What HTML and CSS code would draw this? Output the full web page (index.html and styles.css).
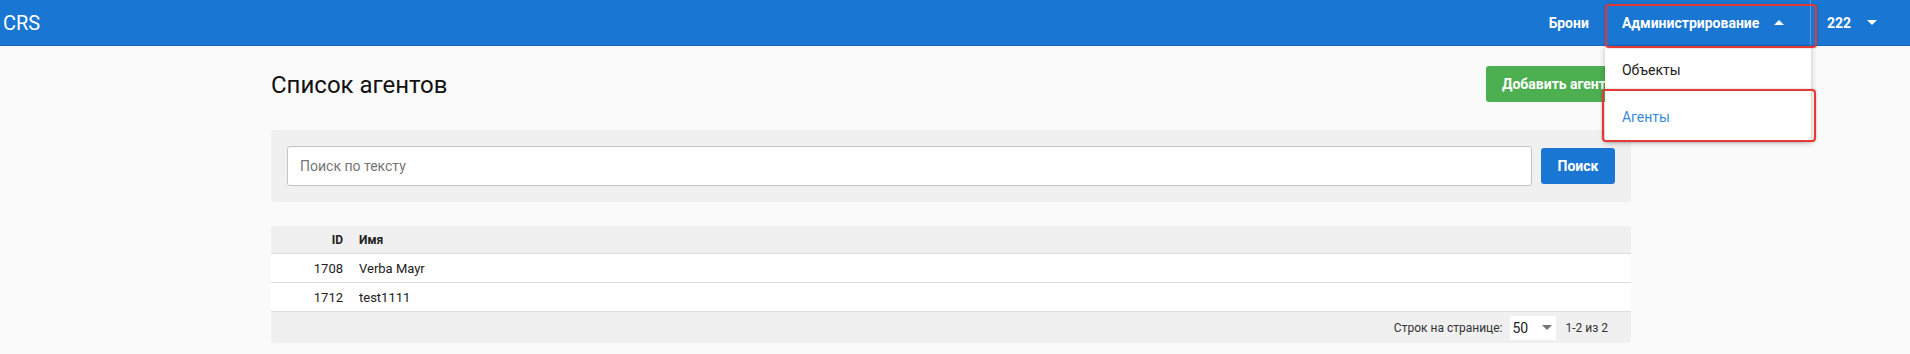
FILE: index.html
```html
<!DOCTYPE html>
<html lang="ru">

<head>
    <meta charset="UTF-8">
    <title>CRS</title>
    <link rel="stylesheet" href="styles.css">
</head>

<body>
    <header class="topbar">
        <div class="brand">CRS</div>
        <nav class="nav">
            <a class="nav-item">Брони</a>
            <div class="nav-item nav-open">
                Администрирование <span class="caret caret-up"></span>
                <div class="menu">
                    <div class="menu-item">Объекты</div>
                    <div class="menu-item active">Агенты</div>
                </div>
                <div class="mark mark-nav"></div>
                <div class="mark mark-item"></div>
            </div>
            <div class="nav-item">222 <span class="caret"></span></div>
        </nav>
    </header>

    <main class="content">
        <div class="title-row">
            <h1>Список агентов</h1>
            <button class="btn btn-green">Добавить агента</button>
        </div>

        <div class="search-panel">
            <input class="search-input" type="text" placeholder="Поиск по тексту">
            <button class="btn btn-blue">Поиск</button>
        </div>

        <div class="grid">
            <div class="grid-row grid-head">
                <div class="col-id">ID</div>
                <div class="col-name">Имя</div>
            </div>
            <div class="grid-row">
                <div class="col-id">1708</div>
                <div class="col-name">Verba Mayr</div>
            </div>
            <div class="grid-row">
                <div class="col-id">1712</div>
                <div class="col-name">test1111</div>
            </div>
            <div class="grid-footer">
                <span>Строк на странице:</span>
                <div class="page-select">50 <span class="caret caret-grey"></span></div>
                <span>1-2 из 2</span>
            </div>
        </div>
    </main>
</body>

</html>
```

FILE: styles.css
```css
body {
    margin: 0;
    background-color: #fafafa;
    font-family: Roboto, "Noto Sans", sans-serif;
    color: #212121;
}

.topbar {
    height: 46px;
    background-color: #1976d2;
    border-bottom: 1px solid #1565c0;
    box-sizing: border-box;
    display: flex;
    align-items: center;
    justify-content: space-between;
    color: #fff;
}

.brand {
    font-size: 20px;
    padding-left: 3px;
}

.nav {
    display: flex;
    align-items: stretch;
    height: 100%;
    padding-right: 17px;
}

.nav-item {
    position: relative;
    display: flex;
    align-items: center;
    font-size: 14px;
    font-weight: bold;
    padding: 0 16px;
}

.nav-open {
    width: 206px;
    box-sizing: border-box;
    padding: 0 0 0 17px;
    border-right: 1px solid #5a9be0;
}

.caret {
    display: inline-block;
    width: 0;
    height: 0;
    border-left: 5px solid transparent;
    border-right: 5px solid transparent;
    border-top: 5px solid #fff;
    margin-left: 16px;
}

.caret-up {
    border-top: none;
    border-bottom: 5px solid #fff;
    margin-left: 15px;
}

.caret-grey {
    border-top-color: #757575;
    margin-left: 14px;
}

.menu {
    position: absolute;
    top: 46px;
    left: 0;
    width: 206px;
    background: #fff;
    box-shadow: 0 2px 6px rgba(0, 0, 0, 0.25);
    padding: 1px 0 0;
    z-index: 5;
}

.menu-item {
    height: 47px;
    line-height: 47px;
    padding-left: 17px;
    font-size: 14px;
    font-weight: normal;
    color: #212121;
}

.menu-item.active {
    color: #3b8ad9;
}

.mark {
    position: absolute;
    border: 2px solid #e53935;
    border-radius: 4px;
    z-index: 10;
    box-shadow: 0 0 2px rgba(0, 0, 0, 0.3);
}

.mark-nav {
    top: 4px;
    left: 0;
    width: 208px;
    height: 40px;
}

.mark-item {
    top: 89px;
    left: -3px;
    width: 210px;
    height: 49px;
}

.content {
    width: 1360px;
    margin-left: 271px;
}

.title-row {
    display: flex;
    justify-content: space-between;
    align-items: center;
    padding-top: 20px;
    height: 36px;
}

.title-row h1 {
    margin: 0;
    font-size: 24px;
    font-weight: normal;
    color: #111;
    padding-top: 2px;
}

.btn {
    border: none;
    border-radius: 3px;
    color: #fff;
    font-family: Roboto, "Noto Sans", sans-serif;
    font-size: 14px;
    font-weight: bold;
    height: 36px;
    padding: 0 16px;
}

.btn-green {
    background-color: #4caf50;
    width: 144px;
    text-align: left;
    margin-right: 1px;
}

.btn-blue {
    background-color: #1976d2;
    width: 74px;
}

.search-panel {
    margin-top: 28px;
    background-color: #f0f0f0;
    border-radius: 4px;
    padding: 16px;
    display: flex;
    align-items: center;
    gap: 9px;
}

.search-input {
    flex: 1;
    height: 40px;
    box-sizing: border-box;
    border: 1px solid #c4c4c4;
    border-radius: 3px;
    background: #fff;
    padding: 0 12px;
    font-family: Roboto, "Noto Sans", sans-serif;
    font-size: 14px;
}

.search-input::placeholder {
    color: #757575;
}

.grid {
    margin-top: 24px;
    background-color: #f0f0f0;
    border-radius: 4px;
    font-size: 13px;
    overflow: hidden;
}

.grid-row {
    display: flex;
    align-items: center;
    height: 28px;
    background: #fff;
    border-bottom: 1px solid #dcdcdc;
}

.grid-head {
    height: 27px;
    background: #f0f0f0;
    font-weight: bold;
    font-size: 12px;
}

.col-id {
    width: 72px;
    text-align: right;
}

.col-name {
    padding-left: 16px;
}

.grid-footer {
    height: 31px;
    display: flex;
    align-items: center;
    justify-content: flex-end;
    padding-right: 23px;
    font-size: 12px;
    color: #333;
}

.page-select {
    display: flex;
    align-items: center;
    background: #fff;
    height: 24px;
    width: 46px;
    box-sizing: border-box;
    margin: 0 9px 0 8px;
    padding-left: 2px;
    font-size: 14px;
    color: #212121;
}
```
